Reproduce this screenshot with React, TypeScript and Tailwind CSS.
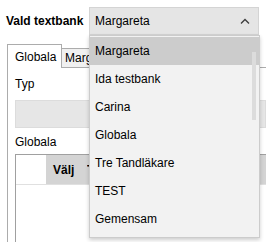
import React from "react"

const items = ["Margareta", "Ida testbank", "Carina", "Globala", "Tre Tandläkare", "TEST", "Gemensam"]

function ChevronUp() {
	return (
		<svg width="10" height="6" viewBox="0 0 10 6" className="block">
			<polyline points="1,5.5 5,1.5 9,5.5" fill="none" stroke="#3c3c3c" strokeWidth="1.3" />
		</svg>
	)
}

export default function App() {
	return (
		<div
			className="relative h-[242px] w-[266px] overflow-hidden bg-white text-[12px] leading-[16px] text-black"
			style={{ fontFamily: '"Liberation Sans", Arial, sans-serif' }}
		>
			<div className="flex items-center pt-[7px]">
				<div className="w-[89px] pl-[6px] font-bold">Vald textbank</div>
				<div className="flex h-[28px] w-[170px] items-center justify-between border border-[#d4d4d4] bg-[#e5e5e5] pl-[5px] pr-[8px]">
					<span>Margareta</span>
					<ChevronUp />
				</div>
			</div>

			<div className="ml-[7px] mt-[9px]">
				<div className="flex h-[23px] items-end">
					<div className="relative z-10 -mb-px flex h-[24px] w-[55px] items-center border border-b-0 border-[#acacac] bg-white pl-[7px]">
						Globala
					</div>
					<div className="flex h-[19px] w-[27px] items-center overflow-hidden whitespace-nowrap border-t border-[#acacac] bg-[#f0f0f0] pl-[3px]">
						Margareta
					</div>
				</div>
				<div className="h-[200px] border-l border-t border-[#acacac] pl-[7px] pt-[8px]">
					<div>Typ</div>
					<div className="mt-[8px] h-[28px] border border-[#dcdcdc] bg-[#e6e6e6]" />
					<div className="mt-[6px]">Globala</div>
					<div className="mt-[4px] h-[120px] border-l border-t border-[#a0a0a0] bg-white">
						<div className="flex h-[30px] border-b border-[#e0e0e0]">
							<div className="w-[30px] bg-white" />
							<div className="flex flex-1 items-center bg-[#d4d4d4] pl-[7px] font-bold">
								<span className="w-[34px]">Välj</span>
								<span className="w-[3px] overflow-hidden">T</span>
							</div>
						</div>
					</div>
				</div>
			</div>

			<div className="absolute left-[89px] top-[35px] h-[203px] w-[171px] border border-[#cccccc] bg-[#f2f2f2] pt-px shadow-[0_2px_4px_rgba(0,0,0,0.2)]">
				{items.map((item, i) => (
					<div
						key={item}
						className={"flex h-[28px] items-center pl-[5px] " + (i === 0 ? "bg-[#cccccc]" : "")}
					>
						{item}
					</div>
				))}
				<div className="absolute left-[162px] top-[16px] h-[68px] w-[4px] bg-[#dcdcdc]" />
			</div>
		</div>
	)
}
